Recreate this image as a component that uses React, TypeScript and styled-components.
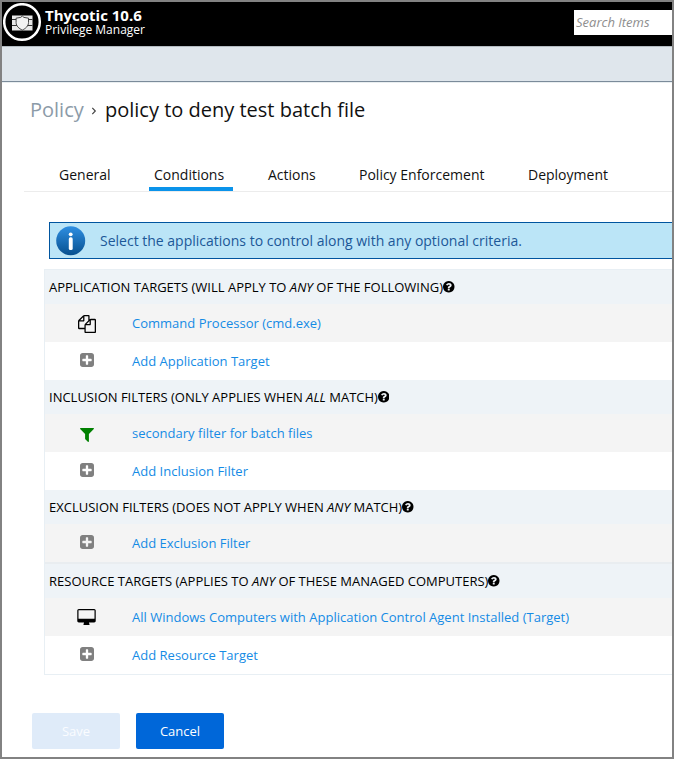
import React from "react";
import styled, { createGlobalStyle } from "styled-components";

const GlobalStyle = createGlobalStyle`
  *, *::before, *::after { box-sizing: border-box; }
  body { margin: 0; background: #fff; font-family: "Open Sans", "Noto Sans", sans-serif; color: #111; }
`;

const Frame = styled.div`
  width: 674px;
  height: 759px;
  border: 2px solid #828282;
  overflow: hidden;
  display: flex;
  flex-direction: column;
  background: #fff;
`;

const Header = styled.header`
  height: 44px;
  flex: none;
  background: #000;
  color: #fff;
  display: flex;
  justify-content: space-between;
`;

const Brand = styled.div`
  display: flex;
  gap: 3px;
  padding: 1px 0 0 1px;
`;

const BrandText = styled.div`
  padding-top: 5px;
  white-space: nowrap;
`;

const Product = styled.div`
  font-size: 15px;
  line-height: 15px;
  font-weight: 700;
`;

const Edition = styled.div`
  font-size: 12px;
  line-height: 14px;
`;

const SearchBox = styled.input`
  width: 98px;
  height: 25px;
  margin-top: 8px;
  padding: 0 0 2px 2px;
  border: 0;
  border-radius: 0;
  background: #fff;
  font: italic 13px "Open Sans", sans-serif;
  &::placeholder { color: #8e8e8e; opacity: 1; }
`;

const NavBand = styled.div`
  height: 37px;
  flex: none;
  background: #dfe6ec;
  border-top: 1px solid #b4bcc2;
  border-bottom: 1px solid #e9eef0;
  box-shadow: inset 0 -1px 0 #7b8b9a;
`;

const Title = styled.h1`
  margin: 12px 0 0 28px;
  height: 30px;
  display: flex;
  align-items: center;
  font-size: 20px;
  line-height: 30px;
  font-weight: 400;
  color: #111;
  white-space: nowrap;
`;

const Crumb = styled.span`
  color: #8c9ba8;
  width: 54px;
`;

const Chevron = styled.svg`
  margin: 2px 8px 0 7px;
`;

const Tabs = styled.nav`
  display: flex;
  margin: 31px 0 0 22px;
  padding-left: 30px;
  height: 36px;
  flex: none;
  border-bottom: 1px solid #ececec;
`;

const Tab = styled.a<{ $active?: boolean; $width: number; $gap: number }>`
  width: ${(p) => p.$width}px;
  margin-right: ${(p) => p.$gap}px;
  height: 35px;
  padding-left: 5px;
  border-bottom: 4px solid ${(p) => (p.$active ? "#0b93ea" : "transparent")};
  font-size: 14px;
  line-height: 38px;
  white-space: nowrap;
  color: #111;
`;

const Notice = styled.div`
  margin: 30px 0 0 47px;
  height: 37px;
  flex: none;
  border: 1px solid #00559f;
  border-right: 0;
  background: #bbe5f7;
  color: #1c5898;
  display: flex;
  align-items: center;
  gap: 14px;
  padding-left: 6px;
  font-size: 14px;
  white-space: nowrap;
`;

const Criteria = styled.div`
  margin: 10px 0 0 42px;
  border: 1px solid #e8eff4;
  border-right: 0;
  flex: none;
`;

const SectionTitle = styled.div<{ $divided?: boolean }>`
  height: ${(p) => (p.$divided ? 36 : 34)}px;
  border-top: ${(p) => (p.$divided ? "2px solid #e9edf0" : "0")};
  background: #eef3f7;
  padding-left: 4px;
  display: flex;
  align-items: center;
  font-size: 13px;
  white-space: pre;
  color: #000;
`;

const Row = styled.div<{ $shaded?: boolean }>`
  height: 38px;
  background: ${(p) => (p.$shaded ? "#f4f4f4" : "#fff")};
  display: grid;
  grid-template-columns: 83px 1fr;
  align-items: center;
  padding-left: 4px;
`;

const IconCell = styled.div<{ $shift: number }>`
  display: flex;
  justify-content: center;
  padding-right: 8px;
  margin-top: ${(p) => p.$shift}px;
`;

const Link = styled.a`
  color: #158be5;
  font-size: 13px;
  letter-spacing: 0.01px;
  white-space: nowrap;
`;

const Actions = styled.div`
  display: flex;
  gap: 16px;
  margin: 38px 0 0 30px;
`;

const Button = styled.button<{ $muted?: boolean }>`
  width: 88px;
  height: 36px;
  border: 0;
  border-radius: 2px;
  padding: 0;
  background: ${(p) => (p.$muted ? "#dfebf9" : "#0067d9")};
  color: ${(p) => (p.$muted ? "#fafcff" : "#fff")};
  font: 13px "Open Sans", sans-serif;
`;

type GlyphName = "files" | "plus" | "filter" | "desktop" | "help";

const glyphs: Record<GlyphName, { box: string; w: number; h: number; fill: string; shift: number; d: string }> = {
  files: {
    box: "0 0 1792 1792", w: 18, h: 18, fill: "#000", shift: 2,
    d: "M1696 384q40 0 68 28t28 68v1216q0 40-28 68t-68 28h-960q-40 0-68-28t-28-68v-288h-544q-40 0-68-28t-28-68v-672q0-40 20-88t48-76l408-408q28-28 76-48t88-20h416q40 0 68 28t28 68v328q68-40 128-40h416zm-544 213l-299 299h299v-299zm-640-384l-299 299h299v-299zm196 647l316-316v-416h-384v416q0 40-28 68t-68 28h-416v640h512v-256q0-40 20-88t48-76zm956 804v-1152h-384v416q0 40-28 68t-68 28h-416v640h896z",
  },
  plus: {
    box: "128 128 1536 1536", w: 14, h: 14, fill: "#808080", shift: -2,
    d: "M1408 960v-128q0-26-19-45t-45-19h-320v-320q0-26-19-45t-45-19h-128q-26 0-45 19t-19 45v320h-320q-26 0-45 19t-19 45v128q0 26 19 45t45 19h320v320q0 26 19 45t45 19h128q26 0 45-19t19-45v-320h320q26 0 45-19t19-45zm256-544v960q0 119-84.5 203.5t-203.5 84.5h-960q-119 0-203.5-84.5t-84.5-203.5v-960q0-119 84.5-203.5t203.5-84.5h960q119 0 203.5 84.5t84.5 203.5z",
  },
  filter: {
    box: "192 256 1408 1408", w: 14, h: 14, fill: "#008000", shift: 3,
    d: "M1595 295q17 41-14 70l-493 493v742q0 42-39 59-13 5-25 5-27 0-45-19l-256-256q-19-19-19-45v-486l-493-493q-31-29-14-70 17-39 59-39h1280q42 0 59 39z",
  },
  desktop: {
    box: "-64 0 1920 1664", w: 19, h: 16, fill: "#000", shift: 0,
    d: "M1728 992v-832q0-13-9.5-22.5t-22.5-9.5h-1600q-13 0-22.5 9.5t-9.5 22.5v832q0 13 9.5 22.5t22.5 9.5h1600q13 0 22.500-9.500t9.500-22.500zm128-832v1088q0 66-47 113t-113 47h-544q0 37 16 77.5t32 71 16 43.5q0 26-19 45t-45 19h-512q-26 0-45-19t-19-45q0-14 16-44t32-70 16-78h-544q-66 0-113-47t-47-113v-1088q0-66 47-113t113-47h1600q66 0 113 47t47 113z",
  },
  help: {
    box: "128 128 1536 1536", w: 11.5, h: 11.5, fill: "#000", shift: 0,
    d: "M1024 1376v-192q0-14-9-23t-23-9h-192q-14 0-23 9t-9 23v192q0 14 9 23t23 9h192q14 0 23-9t9-23zm256-672q0-88-55.5-163t-138.5-116-170-41q-243 0-371 213-15 24 8 42l132 100q7 6 19 6 16 0 25-12 53-68 86-92 34-24 86-24 48 0 85.5 26t37.5 59q0 38-20 61t-68 45q-63 28-115.5 86.5t-52.5 125.5v36q0 14 9 23t23 9h192q14 0 23-9t9-23q0-19 21.5-49.5t54.5-49.5q32-18 49-28.5t46-35 44.5-48 28-60.5 12.5-81zm384 192q0 209-103 385.5t-279.5 279.5-385.5 103-385.5-103-279.5-279.5-103-385.5 103-385.5 279.5-279.5 385.5-103 385.5 103 279.5 279.5 103 385.5z",
  },
};

const Glyph = ({ name }: { name: GlyphName }) => {
  const g = glyphs[name];
  return (
    <svg width={g.w} height={g.h} viewBox={g.box} fill={g.fill} aria-hidden="true">
      <path d={g.d} />
    </svg>
  );
};

const Logo = () => (
  <svg width="39" height="39" viewBox="0 0 39 39" aria-hidden="true">
    <circle cx="19" cy="19" r="17.8" fill="#000" stroke="#fff" strokeWidth="2.5" />
    <path d="M9 12.500h20.500v15H9z" fill="#e8e8e8" />
    <path d="M9 16.500h20.500M9 22.500h20.500" stroke="#333" strokeWidth="1" />
    <path d="M19.300 13l1.600 1.400 4.600.800v4.300c0 3.700-3 6-6.200 7.600-3.200-1.600-6.200-3.900-6.200-7.600v-4.300l4.600-.800z" fill="#f2f2f2" stroke="#333" strokeWidth=".9" />
  </svg>
);

const InfoBadge = () => (
  <svg width="30" height="30" viewBox="0 0 30 30" aria-hidden="true">
    <defs>
      <linearGradient id="badge" x1="0" y1="0" x2="0" y2="1">
        <stop offset="0" stopColor="#2f8fe2" />
        <stop offset="1" stopColor="#07508f" />
      </linearGradient>
    </defs>
    <circle cx="14.700" cy="14.700" r="14.500" fill="url(#badge)" />
    <circle cx="14.700" cy="8.300" r="1.900" fill="#fff" />
    <rect x="12.800" y="11.300" width="3.900" height="12.700" rx="1.600" fill="#fff" />
  </svg>
);

type Item = { icon: GlyphName; label: string; shaded?: boolean };
type Section = { before: string; word: string; after: string; divided?: boolean; items: Item[] };

const sections: Section[] = [
  {
    before: "APPLICATION TARGETS (WILL APPLY TO ", word: "ANY", after: " OF THE FOLLOWING)",
    items: [
      { icon: "files", label: "Command Processor (cmd.exe)", shaded: true },
      { icon: "plus", label: "Add Application Target" },
    ],
  },
  {
    before: "INCLUSION FILTERS (ONLY APPLIES WHEN ", word: "ALL", after: " MATCH)",
    items: [
      { icon: "filter", label: "secondary filter for batch files", shaded: true },
      { icon: "plus", label: "Add Inclusion Filter" },
    ],
  },
  {
    before: "EXCLUSION FILTERS (DOES NOT APPLY WHEN ", word: "ANY", after: " MATCH)",
    items: [{ icon: "plus", label: "Add Exclusion Filter", shaded: true }],
  },
  {
    before: "RESOURCE TARGETS (APPLIES TO ", word: "ANY", after: " OF THESE MANAGED COMPUTERS)", divided: true,
    items: [
      { icon: "desktop", label: "All Windows Computers with Application Control Agent Installed (Target)", shaded: true },
      { icon: "plus", label: "Add Resource Target" },
    ],
  },
];

const tabs = [
  { label: "General", width: 60, gap: 35 },
  { label: "Conditions", width: 84, gap: 30, active: true },
  { label: "Actions", width: 60, gap: 31 },
  { label: "Policy Enforcement", width: 135, gap: 34 },
  { label: "Deployment", width: 90, gap: 0 },
];

export default function App() {
  return (
    <>
      <GlobalStyle />
      <Frame>
        <Header>
          <Brand>
            <Logo />
            <BrandText>
              <Product>Thycotic 10.6</Product>
              <Edition>Privilege Manager</Edition>
            </BrandText>
          </Brand>
          <SearchBox placeholder="Search Items" />
        </Header>
        <NavBand />
        <Title>
          <Crumb>Policy</Crumb>
          <Chevron width="6" height="8" viewBox="0 0 6 8" fill="none" stroke="#444" strokeWidth="1.2">
            <path d="M1.300 .8L4.300 4 1.300 7.200" />
          </Chevron>
          <span>policy to deny test batch file</span>
        </Title>
        <Tabs>
          {tabs.map((t) => (
            <Tab key={t.label} $active={t.active} $width={t.width} $gap={t.gap}>{t.label}</Tab>
          ))}
        </Tabs>
        <Notice>
          <InfoBadge />
          <span>Select the applications to control along with any optional criteria.</span>
        </Notice>
        <Criteria>
          {sections.map((s) => (
            <React.Fragment key={s.before}>
              <SectionTitle $divided={s.divided}>
                <span>{s.before}<em>{s.word}</em>{s.after}</span>
                <Glyph name="help" />
              </SectionTitle>
              {s.items.map((i) => (
                <Row key={i.label} $shaded={i.shaded}>
                  <IconCell $shift={glyphs[i.icon].shift}><Glyph name={i.icon} /></IconCell>
                  <Link>{i.label}</Link>
                </Row>
              ))}
            </React.Fragment>
          ))}
        </Criteria>
        <Actions>
          <Button $muted>Save</Button>
          <Button>Cancel</Button>
        </Actions>
      </Frame>
    </>
  );
}
